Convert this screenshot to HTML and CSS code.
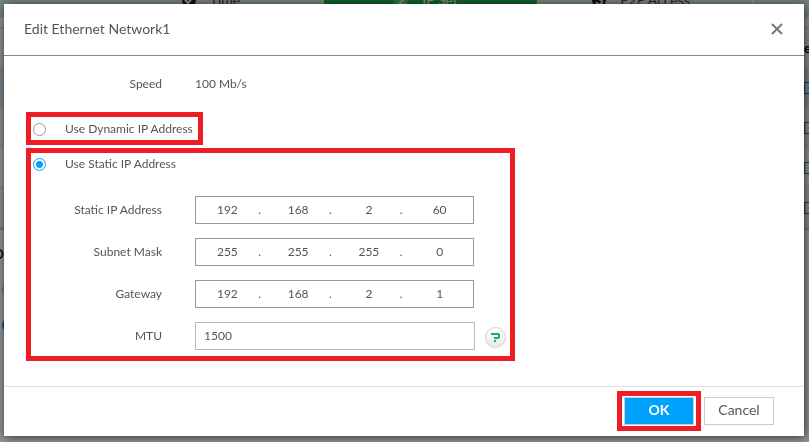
FILE: index.html
```
<!DOCTYPE html>
<html lang="en">
<head>
    <meta charset="UTF-8">
    <meta name="viewport" content="width=device-width, initial-scale=1.0">
    <title>Edit Ethernet Network1</title>
    <link rel="stylesheet" href="styles.css">
</head>
<body>
    <!-- wizard page under the dialog -->
    <div class="page">
        <div class="steps">
            <div class="step">
                <span class="step-num">
                    <svg width="10" height="10" viewBox="0 0 10 10"><path d="M1 5l3 3 5-6" fill="none" stroke="#fff" stroke-width="2"/></svg>
                </span>
                Time
            </div>
            <div class="step active"><span class="step-num">2</span>IP Set</div>
            <div class="step"><span class="step-num">3</span>P2P Access</div>
        </div>
        <div class="nic-table">
            <div class="nic-row nic-head"><span class="nic-title">e</span></div>
            <div class="nic-row selected"><span class="nic-icon"></span></div>
            <div class="nic-row"><span class="nic-icon"></span></div>
            <div class="nic-row"><span class="nic-icon"></span></div>
            <div class="nic-row"><span class="nic-icon"></span></div>
        </div>
        <div class="dns">
            <span class="dns-title">D</span>
            <span class="dns-radio"></span>
            <span class="dns-radio on"></span>
        </div>
    </div>

    <div class="overlay">
        <form class="dialog" id="editForm">
            <div class="dialog-header">
                <h1>Edit Ethernet Network1</h1>
                <button type="button" class="close" aria-label="Close">
                    <svg width="12" height="12" viewBox="0 0 12 12"><path d="M1 1l10 10M11 1L1 11" stroke="#777" stroke-width="2"/></svg>
                </button>
            </div>

            <div class="dialog-body">
                <div class="form-row speed-row">
                    <span class="label">Speed</span>
                    <span class="value">100 Mb/s</span>
                </div>

                <div class="mark mark-dynamic">
                    <label class="mode">
                        <input type="radio" name="mode" value="dynamic">
                        <span>Use Dynamic IP Address</span>
                    </label>
                </div>

                <div class="mark mark-static">
                    <label class="mode">
                        <input type="radio" name="mode" value="static" checked>
                        <span>Use Static IP Address</span>
                    </label>

                    <div class="fields">
                        <div class="form-row">
                            <label class="label" for="ip1">Static IP Address</label>
                            <div class="ip-box">
                                <input type="text" id="ip1" value="192"><span>.</span>
                                <input type="text" aria-label="Static IP part 2" value="168"><span>.</span>
                                <input type="text" aria-label="Static IP part 3" value="2"><span>.</span>
                                <input type="text" aria-label="Static IP part 4" value="60">
                            </div>
                        </div>
                        <div class="form-row">
                            <label class="label" for="mask1">Subnet Mask</label>
                            <div class="ip-box">
                                <input type="text" id="mask1" value="255"><span>.</span>
                                <input type="text" aria-label="Subnet mask part 2" value="255"><span>.</span>
                                <input type="text" aria-label="Subnet mask part 3" value="255"><span>.</span>
                                <input type="text" aria-label="Subnet mask part 4" value="0">
                            </div>
                        </div>
                        <div class="form-row">
                            <label class="label" for="gw1">Gateway</label>
                            <div class="ip-box">
                                <input type="text" id="gw1" value="192"><span>.</span>
                                <input type="text" aria-label="Gateway part 2" value="168"><span>.</span>
                                <input type="text" aria-label="Gateway part 3" value="2"><span>.</span>
                                <input type="text" aria-label="Gateway part 4" value="1">
                            </div>
                        </div>
                        <div class="form-row">
                            <label class="label" for="mtu">MTU</label>
                            <input type="text" class="mtu" id="mtu" value="1500">
                            <button type="button" class="help" aria-label="Help">
                                <svg width="9" height="9" viewBox="0 0 9 9"><path d="M0 0h8v1h1v4H8v1H3V4h4V2H0zM3 7h2v2H3z" fill="#1fae4b"/></svg>
                            </button>
                        </div>
                    </div>
                </div>
            </div>

            <div class="dialog-footer">
                <div class="mark mark-ok">
                    <button type="submit" class="btn btn-ok">OK</button>
                </div>
                <button type="button" class="btn">Cancel</button>
            </div>
        </form>
    </div>
</body>
</html>
```
FILE: styles.css
```
* {
    box-sizing: border-box;
}

body {
    margin: 0;
    font-family: Lato, "Open Sans", sans-serif;
    font-size: 12px;
    color: #555;
    background-color: #fff;
}

input, button {
    font-family: inherit;
    font-size: inherit;
    color: inherit;
}

/* page behind */
.page {
    height: 100vh;
    overflow: hidden;
}

.steps {
    display: flex;
    height: 35px;
    margin-top: -18px;
    padding-left: 108px;
    background-color: #cfe8d7;
}

.step {
    display: flex;
    justify-content: center;
    align-items: center;
    gap: 14px;
    flex: 0 0 215px;
    padding-right: 8px;
    font-size: 14px;
    color: #444;
    border-right: 1px solid #fff;
}

.step.active {
    background-color: #1fae4b;
    color: #fff;
    clip-path: polygon(2px 0, 100% 0, 213px 100%, 0 100%);
}

.step-num {
    display: flex;
    justify-content: center;
    align-items: center;
    width: 14px;
    height: 14px;
    border-radius: 50%;
    background-color: #222;
    color: #fff;
    font-weight: bold;
}

.step.active .step-num {
    background-color: #5cc67c;
}

.nic-table {
    margin-top: 10px;
    border-top: 1px solid #ccc;
    border-bottom: 2px solid #ccc;
}

.nic-row {
    display: flex;
    justify-content: flex-end;
    align-items: center;
    height: 40px;
    border-bottom: 1px solid #e2e2e2;
}

.nic-row:nth-child(odd) {
    background-color: #f5f5f5;
}

.nic-row.selected {
    background-color: #cfe3f0;
}

.nic-title {
    width: 5px;
    overflow: hidden;
    font-size: 13px;
    font-weight: bold;
    color: #000;
}

.nic-icon {
    width: 5px;
    height: 12px;
    border: 1px solid #15799c;
    border-right: none;
}

.dns {
    display: flex;
    flex-direction: column;
    gap: 21px;
    padding-top: 16px;
}

.dns-title {
    width: 4px;
    overflow: hidden;
    direction: rtl;
    font-size: 13px;
    font-weight: bold;
    color: #222;
}

.dns-radio {
    width: 14px;
    height: 14px;
    margin-left: 2px;
    border: 1px solid #aaa;
    border-radius: 50%;
}

.dns-radio.on {
    border: 2px solid #0099e5;
}

/* dialog */
.overlay {
    position: fixed;
    inset: 0;
    display: flex;
    padding: 4px 5px 6px 4px;
    background-color: rgba(0, 0, 0, 0.42);
}

.dialog {
    display: flex;
    flex-direction: column;
    flex: 1;
    background-color: #fff;
    box-shadow: 1px 1px 10px rgba(0, 0, 0, 0.7);
}

.dialog-header {
    display: flex;
    justify-content: space-between;
    align-items: center;
    height: 52px;
    padding: 0 21px 2px 20px;
    border-bottom: 1px solid #888;
}

.dialog-header h1 {
    margin: 0;
    font-size: 14px;
    font-weight: normal;
}

.close {
    display: flex;
    padding: 0;
    border: none;
    background: none;
    cursor: pointer;
}

.dialog-body {
    flex: 1;
    padding: 14px 22px 0;
}

.form-row {
    display: flex;
    align-items: center;
    height: 28px;
}

.label {
    flex: 0 0 136px;
    text-align: right;
    margin-right: 33px;
}

.label, .value, .mode span {
    padding-bottom: 2px;
}

.speed-row {
    margin-bottom: 14px;
}

/* red frames */
.mark {
    border: 5px solid #ee1c24;
}

.mark-dynamic {
    width: 177px;
    height: 33px;
    margin-bottom: 3px;
    padding: 2px;
    white-space: nowrap;
}

.mark-static {
    width: 489px;
    max-width: 100%;
    padding: 1px 2px 6px;
}

.mode {
    display: flex;
    align-items: center;
    height: 20px;
    gap: 19px;
}

.mode input {
    appearance: none;
    flex: none;
    width: 13px;
    height: 13px;
    margin: 0;
    border: 1px solid #999;
    border-radius: 50%;
}

.mode input:checked {
    border-color: #00a2ff;
    background: radial-gradient(circle, #00a2ff 3px, #fff 4px);
}

.fields {
    display: flex;
    flex-direction: column;
    gap: 14px;
    padding-top: 22px;
}

.fields .label {
    flex-basis: 129px;
}

.ip-box {
    display: flex;
    align-items: center;
    width: 279px;
    height: 28px;
    padding: 0 5px 2px 3px;
    border: 1px solid #999;
}

.ip-box input {
    flex: 1;
    min-width: 0;
    padding: 0;
    border: none;
    text-align: center;
    background: none;
    outline: none;
}

.ip-box span {
    width: 8px;
    margin-right: 6px;
    text-align: center;
}

.mtu {
    width: 280px;
    height: 28px;
    padding: 0 8px 2px;
    border: 1px solid #b8b8bd;
}

.help {
    display: flex;
    justify-content: center;
    align-items: center;
    width: 21px;
    height: 21px;
    margin: 2px 0 0 10px;
    padding: 0;
    border: 1px solid #d0d0d0;
    border-radius: 50%;
    background: linear-gradient(#fff, #e8e8e8);
}

.dialog-footer {
    display: flex;
    justify-content: flex-end;
    align-items: center;
    gap: 3px;
    height: 50px;
    padding: 0 30px 2px 0;
    border-top: 1px solid #e0e0e0;
}

.mark-ok {
    padding: 1px 2px;
}

.btn {
    width: 70px;
    height: 28px;
    padding: 0 0 2px;
    border: 1px solid #ccc;
    background-color: #fff;
    font-size: 14px;
    cursor: pointer;
}

.btn-ok {
    display: block;
    background-color: #00a2ff;
    color: #fff;
    font-weight: bold;
}
```
